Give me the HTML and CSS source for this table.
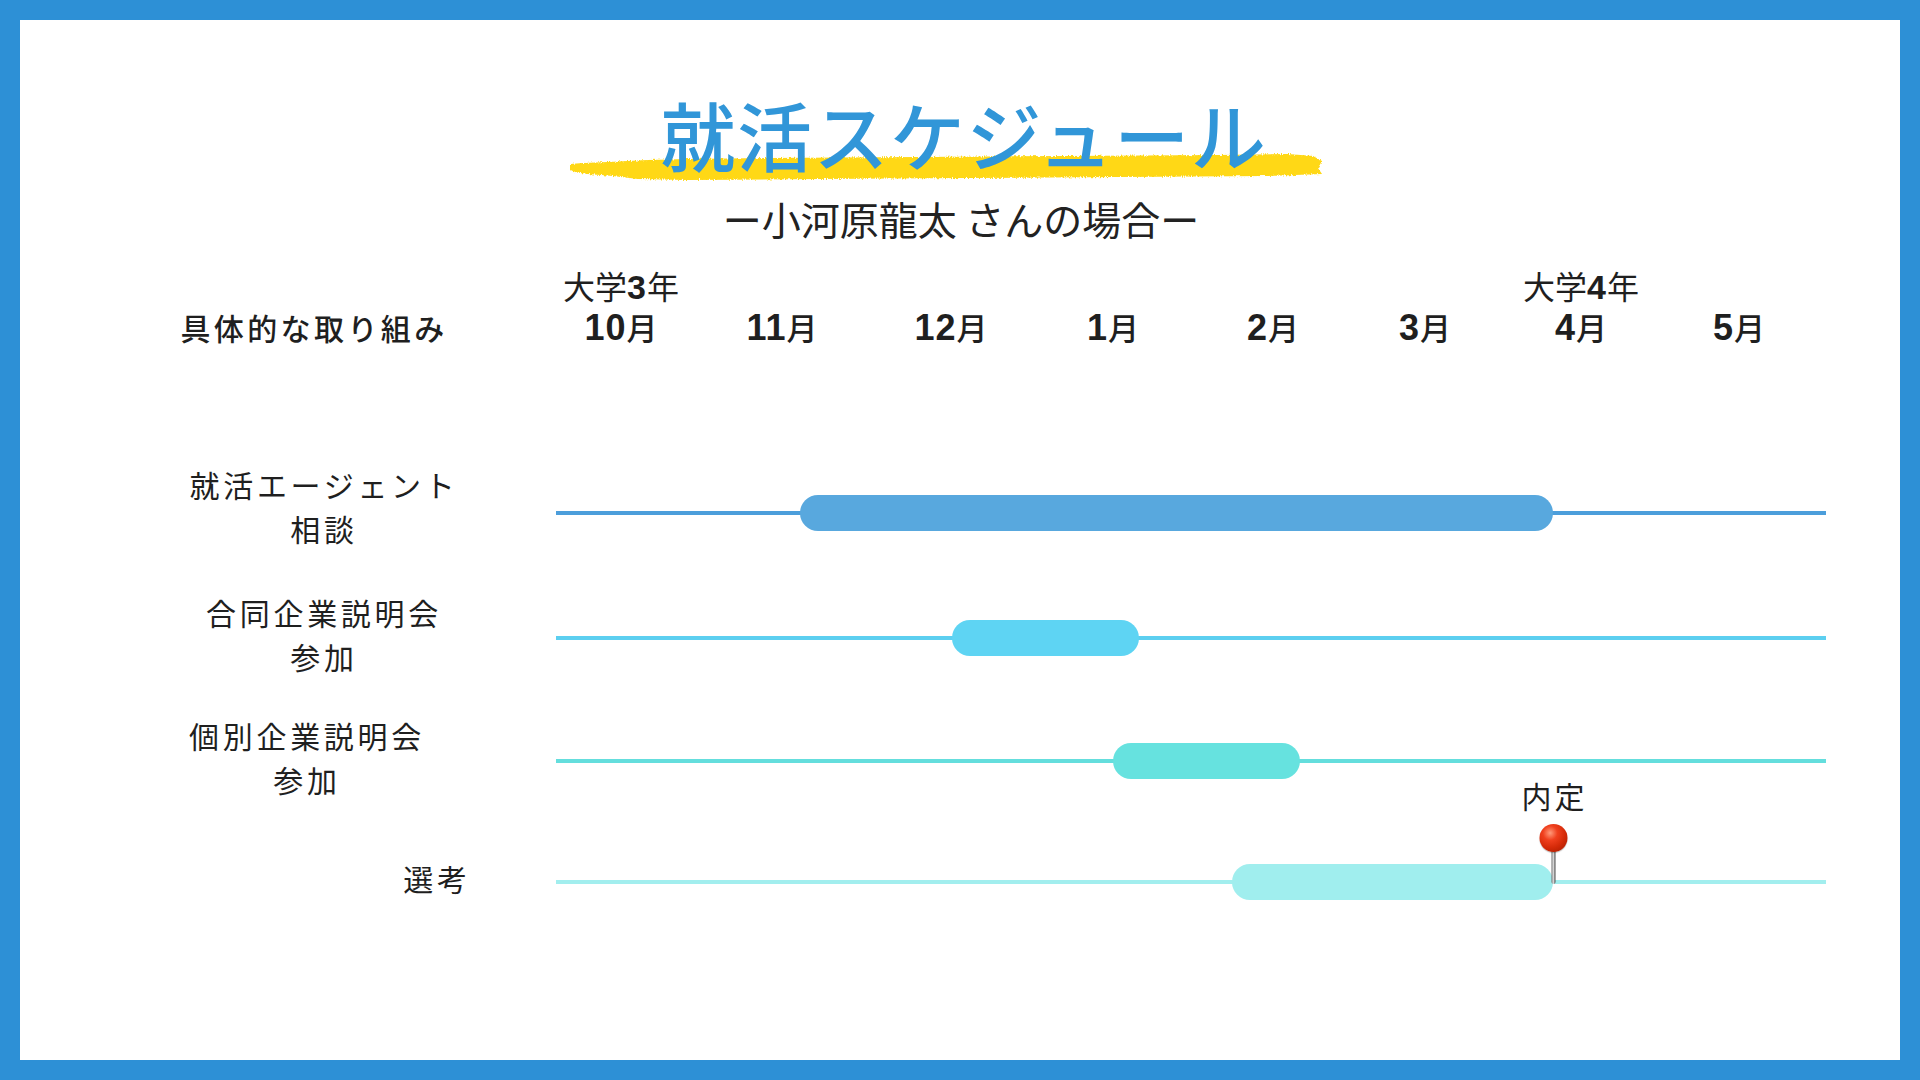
FILE: index.html
```html
<!DOCTYPE html>
<html lang="ja">
<head>
<meta charset="utf-8">
<title>就活スケジュール</title>
<link rel="stylesheet" href="styles.css">
</head>
<body>
<div class="frame">
  <header class="head">
    <div class="title-wrap">
      <svg class="brush" width="760" height="36" viewBox="0 0 760 36" aria-hidden="true">
        <defs>
          <filter id="rough" x="-2%" y="-30%" width="104%" height="160%">
            <feTurbulence type="fractalNoise" baseFrequency="0.9 0.35" numOctaves="2" seed="3" result="n"/>
            <feDisplacementMap in="SourceGraphic" in2="n" scale="4" xChannelSelector="R" yChannelSelector="G"/>
          </filter>
        </defs>
        <polygon filter="url(#rough)" fill="#ffd814" points="2,15 15,14 40,13 80,11 120,10 200,9 350,8 500,7 650,6 720,5 745,7 754,12 750,19 754,25 700,27 550,28 400,29 250,30 120,31 70,30 45,27 20,25 6,23 2,20"/>
      </svg>
      <h1 class="title">就活スケジュール</h1>
    </div>
    <p class="subtitle">ー小河原龍太 さんの場合ー</p>
  </header>

  <section class="chart">
    <div class="chart-head">
      <div class="label label--head">具体的な取り組み</div>
      <div class="scale">
        <div class="year year--3">大学<span class="num">3</span>年</div>
        <div class="year year--4">大学<span class="num">4</span>年</div>
        <div class="month m1"><span class="num">10</span>月</div>
        <div class="month m2"><span class="num">11</span>月</div>
        <div class="month m3"><span class="num">12</span>月</div>
        <div class="month m4"><span class="num">1</span>月</div>
        <div class="month m5"><span class="num">2</span>月</div>
        <div class="month m6"><span class="num">3</span>月</div>
        <div class="month m7"><span class="num">4</span>月</div>
        <div class="month m8"><span class="num">5</span>月</div>
      </div>
    </div>

    <div class="row row--agent">
      <div class="label label--wide label--raise">就活エージェント<br>相談</div>
      <div class="track"><div class="bar" style="left:244px;width:753px"></div></div>
    </div>

    <div class="row row--joint">
      <div class="label label--wide">合同企業説明会<br>参加</div>
      <div class="track"><div class="bar" style="left:396px;width:187px"></div></div>
    </div>

    <div class="row row--single">
      <div class="label label--mid">個別企業説明会<br>参加</div>
      <div class="track"><div class="bar" style="left:557px;width:187px"></div></div>
    </div>

    <div class="row row--select">
      <div class="label label--short">選考</div>
      <div class="track">
        <div class="bar" style="left:676px;width:321px"></div>
        <div class="pin">
          <span class="pin-label">内定</span>
          <span class="pin-head"></span>
          <span class="pin-needle"></span>
        </div>
      </div>
    </div>
  </section>
</div>
</body>
</html>
```

FILE: styles.css
```css
* { box-sizing: border-box; }

html, body {
  margin: 0;
  padding: 0;
  background: #ffffff;
}

body {
  font-family: "Noto Sans CJK JP", "Noto Sans", sans-serif;
  color: #1f1f1f;
}

.frame {
  width: 1920px;
  height: 1080px;
  border: 20px solid #2d90d6;
  background: #ffffff;
  overflow: hidden;
}

/* ---------- heading ---------- */
.head {
  display: flex;
  flex-direction: column;
  align-items: center;
}

.title-wrap {
  position: relative;
  width: 754px;
  margin-top: 77px;
  margin-left: 14px;
}

.brush {
  position: absolute;
  left: -22px;
  top: 52px;
  z-index: 0;
}

.title {
  position: relative;
  z-index: 1;
  margin: 0;
  font-size: 75px;
  line-height: 74px;
  font-weight: 500;
  letter-spacing: 1.5px;
  color: #3196d8;
  text-align: center;
  padding-right: 6px;
}

.subtitle {
  margin: 28px 0 0;
  font-size: 39px;
  line-height: 38px;
  font-weight: 400;
  color: #222222;
  padding-left: 2px;
}

/* ---------- chart ---------- */
.chart {
  display: flex;
  flex-direction: column;
}

.chart-head,
.row {
  display: grid;
  grid-template-columns: 536px 1270px;
}

.chart-head {
  margin-top: 28px;
  align-items: end;
}

.scale {
  display: grid;
  grid-template-columns: 130px 192px 146px 178px 142px 162px 150px 166px;
  grid-template-rows: 40px 44px;
  text-align: center;
}

.year {
  grid-row: 1;
  font-size: 32px;
  line-height: 40px;
  font-weight: 400;
  white-space: nowrap;
}
.year .num { font-size: 34px; }
.year--3 { grid-column: 1; }
.year--4 { grid-column: 7; }

.month {
  grid-row: 2;
  font-size: 31px;
  line-height: 44px;
  font-weight: 500;
  white-space: nowrap;
}
.month .num { font-size: 36px; }
.m1 { grid-column: 1; }
.m2 { grid-column: 2; }
.m3 { grid-column: 3; }
.m4 { grid-column: 4; }
.m5 { grid-column: 5; }
.m6 { grid-column: 6; }
.m7 { grid-column: 7; }
.m8 { grid-column: 8; }

.num {
  font-family: "Liberation Sans", Arial, sans-serif;
  font-weight: 700;
  letter-spacing: 1px;
}

.label {
  font-size: 30px;
  line-height: 44px;
  letter-spacing: 3.7px;
  text-align: center;
  white-space: nowrap;
  padding-bottom: 8px;
}

.label--head {
  padding-left: 52px;
  padding-bottom: 0;
  font-weight: 500;
  letter-spacing: 3.4px;
}
.label--wide { padding-left: 72px; }
.label--mid { padding-left: 38px; }
.label--short { padding-left: 298px; }
.label--raise { padding-bottom: 13px; }

.row {
  align-items: center;
}

.row--agent  { height: 127px; margin-top: 100px; }
.row--joint  { height: 124px; }
.row--single { height: 121px; }
.row--select { height: 121px; }

.track {
  position: relative;
  height: 36px;
  background: linear-gradient(var(--line), var(--line)) center / 100% 4px no-repeat;
}

.bar {
  position: absolute;
  top: 0;
  bottom: 0;
  border-radius: 18px;
  background: var(--bar);
}

.row--agent  { --line: #4c9edb; --bar: #58a8de; }
.row--joint  { --line: #5ccff0; --bar: #5ed4f3; }
.row--single { --line: #64dedd; --bar: #66e2df; }
.row--select { --line: #a2eeee; --bar: #a0eeee; }

/* ---------- pin ---------- */
.pin {
  position: absolute;
  left: 997px;
  bottom: 16px;
  transform: translateX(-50%);
  display: flex;
  flex-direction: column;
  align-items: center;
}

.pin-label {
  font-size: 30px;
  line-height: 30px;
  letter-spacing: 3px;
  padding-left: 3px;
  margin-bottom: 14px;
  white-space: nowrap;
}

.pin-head {
  position: relative;
  z-index: 1;
  width: 28px;
  height: 28px;
  border-radius: 50%;
  background: radial-gradient(circle at 38% 32%, #ff9a7a 0%, #f0401e 28%, #d42a08 58%, #9c1800 100%);
  box-shadow: 0 1px 1px rgba(0, 0, 0, 0.25);
}

.pin-needle {
  width: 4px;
  height: 33px;
  margin-top: -1px;
  background: linear-gradient(90deg, #6c6c6c 0%, #e2e2e2 45%, #8a8a8a 75%, #4e4e4e 100%);
  border-radius: 0 0 2px 2px;
}
```
